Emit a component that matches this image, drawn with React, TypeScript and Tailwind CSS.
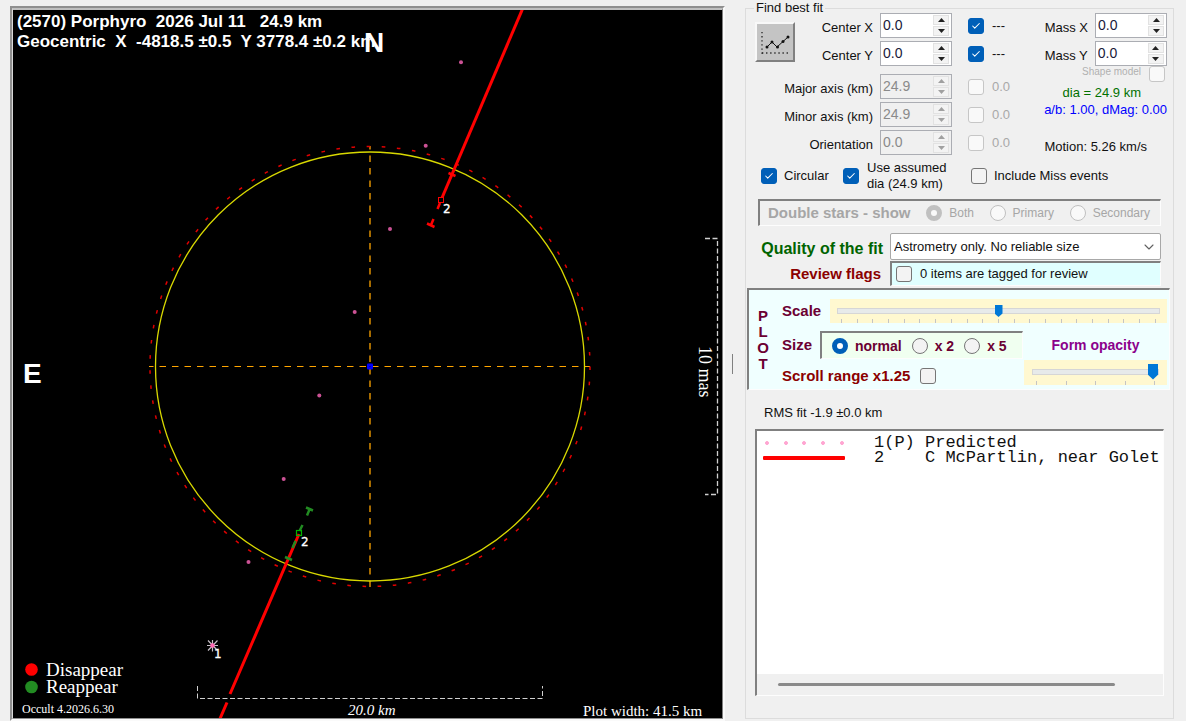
import { useState } from 'react';
import type { ReactNode } from 'react';
import { Check, ChevronDown } from 'lucide-react';

const PREDICTED_DOTS = [
  [461, 62.3],
  [425.7, 145.7],
  [390, 229],
  [354.7, 312],
  [319.3, 395.5],
  [283.7, 479],
  [248.5, 562],
];

function ChordPlot() {
  return (
    <svg
      viewBox="13 10 709 708"
      className="block w-full h-auto bg-black font-['Liberation_Sans',sans-serif]"
      role="img"
      aria-label="Chord plot"
    >
      {/* Axes */}
      <line x1="149" y1="366.5" x2="590" y2="366.5" stroke="#ffa500" strokeDasharray="6.5 6" strokeDashoffset="2" />
      <line x1="370" y1="146" x2="370" y2="587" stroke="#a66b00" strokeWidth="2" strokeDasharray="6.5 6" strokeDashoffset="3" />

      {/* Fitted circle and uncertainty */}
      <circle cx="370" cy="366.5" r="214.5" fill="none" stroke="#d8d800" strokeWidth="1.3" />
      <circle cx="370" cy="366.5" r="220" fill="none" stroke="#e00000" strokeWidth="1.5" strokeDasharray="3.6 11.59" />

      <rect x="367" y="363.5" width="6" height="6" rx="1" fill="#0000ff" />
      <rect x="369.5" y="366" width="1" height="1" fill="#000060" />

      {PREDICTED_DOTS.map(([x, y]) => (
        <circle key={x} cx={x} cy={y} r="2" fill="#cc5295" />
      ))}

      {/* Observed chord, upper part */}
      <g stroke="#ff0000" fill="none">
        <path d="M522.5 9 L441.5 199" strokeWidth="3" />
        <path d="M440 203 L437.5 209 M433.5 219 L431 225" strokeWidth="2.5" />
        <path d="M448.5 173 L455.5 176 M427 223.5 L434.5 227" strokeWidth="2.5" />
        <rect x="438.5" y="197.5" width="5" height="5" fill="#000" />
      </g>

      {/* Observed chord, lower part */}
      <path d="M299 534 L230 694 M227 702.5 L219 721" stroke="#ff0000" strokeWidth="3" />
      <g stroke="#228b22" fill="none" strokeWidth="2.5">
        <path d="M302.5 525 L299.5 531 M309.5 509.5 L307 515.5 M306 507.5 L313 510.5" />
        <path d="M295.5 541 L292.5 548 M285 557 L292 560" />
      </g>
      <rect x="296.5" y="530.5" width="5" height="5" fill="none" stroke="#00b400" strokeWidth="1.2" />

      {/* Star marker */}
      <path
        d="M212.5 640 V651.5 M207 645.5 H218 M208 640.5 L217.5 650.5 M217.5 640.5 L208 650.5"
        stroke="#c8c0c8"
        strokeWidth="1.2"
      />
      <circle cx="212.5" cy="645.5" r="2.3" fill="#ff69b4" />

      <g fill="#fff" fontSize="12" stroke="#fff" strokeWidth="0.3" className="font-['DejaVu_Sans',sans-serif]">
        <text x="443" y="213">2</text>
        <text x="301" y="546">2</text>
        <text x="214" y="658">1</text>
      </g>

      {/* Scale brackets */}
      <g stroke="#d0d0d0" fill="none" strokeDasharray="5 2.5">
        <path d="M197.5 686 V698.5 H542.5 V686" />
        <path d="M705 238.5 H717.5 V494.5 H705" strokeWidth="1.3" />
      </g>

      <g fill="#fff" fontWeight="bold" fontSize="17">
        <text x="17" y="27">{'(2570) Porphyro\u00a0 2026 Jul 11\u00a0\u00a0 24.9 km'}</text>
        <text x="17" y="47">{'Geocentric\u00a0 X\u00a0 -4818.5 ±0.5\u00a0 Y 3778.4 ±0.2 km'}</text>
      </g>
      <g fill="#fff" fontWeight="bold" fontSize="28">
        <text x="364" y="52">N</text>
        <text x="23" y="383">E</text>
      </g>

      <g fill="#fff" className="font-['Liberation_Serif',serif]">
        <text x="46" y="676" fontSize="19">Disappear</text>
        <text x="46" y="693" fontSize="19">Reappear</text>
        <text x="22" y="713" fontSize="12">Occult 4.2026.6.30</text>
        <text x="348" y="715" fontSize="15" fontStyle="italic">20.0 km</text>
        <text x="583" y="716" fontSize="15">Plot width: 41.5 km</text>
        <text transform="translate(699 346) rotate(90)" fontSize="18">10 mas</text>
      </g>
      <circle cx="31.5" cy="669.5" r="6.3" fill="#ff0000" />
      <circle cx="31.5" cy="687" r="6.3" fill="#228b22" />
    </svg>
  );
}

interface CheckProps {
  label: string;
  checked?: boolean;
  disabled?: boolean;
}

function CheckBox({ label, checked = false, disabled = false }: CheckProps) {
  const [on, setOn] = useState(checked);
  return (
    <span className="relative block size-4 shrink-0">
      <input
        type="checkbox"
        aria-label={label}
        checked={on}
        disabled={disabled}
        onChange={() => setOn(!on)}
        className="block size-4 appearance-none rounded-[3px] border border-[#767676] bg-[#f3f3f3] checked:border-[#005fb8] checked:bg-[#005fb8] disabled:border-[#c6c6c6] disabled:bg-[#f9f9f9]"
      />
      {on && <Check className="pointer-events-none absolute top-[3px] left-[3px] size-[10px] text-white" strokeWidth={2.5} />}
    </span>
  );
}

interface SpinProps {
  label: string;
  value: string;
  disabled?: boolean;
}

function SpinBox({ label, value, disabled = false }: SpinProps) {
  return (
    <div className={`flex h-[25px] w-[72px] shrink-0 border border-[#abadb3] ${disabled ? 'bg-[#f0f0f0]' : 'bg-white'}`}>
      <input
        type="text"
        aria-label={label}
        defaultValue={value}
        disabled={disabled}
        className="h-[21px] w-0 flex-1 bg-transparent pl-0.5 text-[14px] text-[#1a1a3a] disabled:text-[#8a8a8a]"
      />
      <div className="flex w-4 flex-col gap-px py-px mr-0.5">
        <button type="button" aria-label={`${label} up`} disabled={disabled} className="flex flex-1 items-center justify-center border border-[#e2e2e2] bg-[#f3f3f3] text-[#222] disabled:text-[#a0a0a0]">
          <svg width="7" height="4" viewBox="0 0 7 4"><path d="M3.5 0 L7 4 H0 Z" fill="currentColor" /></svg>
        </button>
        <button type="button" aria-label={`${label} down`} disabled={disabled} className="flex flex-1 items-center justify-center border border-[#e2e2e2] bg-[#f3f3f3] text-[#222] disabled:text-[#a0a0a0]">
          <svg width="7" height="4" viewBox="0 0 7 4"><path d="M3.5 4 L7 0 H0 Z" fill="currentColor" /></svg>
        </button>
      </div>
    </div>
  );
}

interface FitRowProps extends SpinProps {
  checked?: boolean;
  error: string;
}

function FitRow({ label, value, disabled, checked, error }: FitRowProps) {
  return (
    <div className="flex h-[25px] items-center justify-end">
      <span className="mr-[7px] pt-1">{label}</span>
      <SpinBox label={label} value={value} disabled={disabled} />
      <span className="ml-4">
        <CheckBox label={`Fit ${label}`} checked={checked} disabled={disabled} />
      </span>
      <span className={`ml-2 w-5 ${disabled ? 'text-[#a8a8a8]' : ''}`}>{error}</span>
    </div>
  );
}

interface RadioProps {
  name: string;
  label: string;
  defaultChecked?: boolean;
  disabled?: boolean;
}

function Radio({ name, label, defaultChecked, disabled }: RadioProps) {
  return (
    <label className="flex items-center gap-[7px]">
      <input
        type="radio"
        name={name}
        defaultChecked={defaultChecked}
        disabled={disabled}
        className="size-4 shrink-0 appearance-none rounded-full border border-[#767676] bg-[#f3f3f3] checked:border-5 checked:border-[#005fb8] checked:bg-white disabled:border-[#c0c0c0] disabled:bg-[#f9f9f9]"
      />
      {label}
    </label>
  );
}

function Sunken({ className, children }: { className: string; children: ReactNode }) {
  return (
    <div className={`border-t-2 border-l-2 border-r border-b border-t-[#808080] border-l-[#808080] border-r-[#fdfdfd] border-b-[#fdfdfd] ${className}`}>
      {children}
    </div>
  );
}

function Ticks({ count }: { count: number }) {
  return (
    <div className="flex justify-between px-1">
      {Array.from({ length: count }, (_, i) => (
        <span key={i} className="h-1 w-px bg-[#c4c4c4]" />
      ))}
    </div>
  );
}

export default function App() {
  return (
    <div className="flex min-h-screen bg-[#f0f0f0] pl-[10px] pr-3 font-['Liberation_Sans',sans-serif] text-[13px] leading-4 text-[#111]">
      <main className="mt-[6px] min-w-0 flex-1 self-start border-2 border-t-[#8f8f8f] border-l-[#8f8f8f] border-r-[#fafafa] border-b-[#fafafa]">
        <div className="border-t-2 border-r border-b border-l border-t-[#c0c0c0] border-l-[#d8d8d8] border-r-[#808080] border-b-[#909090]">
          <ChordPlot />
        </div>
      </main>

      {/* Splitter grip */}
      <div className="flex w-5 shrink-0 items-center pt-1.5 pl-[7px]">
        <span className="h-5 w-px bg-[#808080]" />
      </div>

      <fieldset className="mt-[3px] mb-0.5 flex w-[429px] min-w-0 shrink-0 flex-col border border-[#dcdcdc]">
        <legend className="ml-2 h-[10px] px-0.5 leading-[10px]">Find best fit</legend>

        <div className="flex justify-between pl-[9px] pr-[6px]">
          <div className="w-[257px]">
            <div className="flex justify-between">
              <button
                type="button"
                aria-label="Plot residuals"
                className="mt-[9px] size-10 border-2 border-t-[#f8f8f8] border-l-[#f8f8f8] border-r-[#808080] border-b-[#808080] bg-[#c4c4c4]"
              >
                <svg viewBox="0 0 36 36" className="block size-full">
                  <path d="M5 8 V31" stroke="#222" strokeWidth="1.3" strokeDasharray="1.3 2.8" />
                  <path d="M5 29 H33" stroke="#222" strokeWidth="1.3" strokeDasharray="1.3 2.8" />
                  <path d="M10 23 L15 18 L20 23 L31 13" fill="none" stroke="#111" />
                  <g fill="#111">
                    <circle cx="10" cy="23" r="1.5" />
                    <circle cx="15" cy="18" r="1.5" />
                    <circle cx="20.5" cy="23" r="1.5" />
                    <circle cx="26" cy="17.5" r="1.5" />
                    <circle cx="31" cy="13" r="1.5" />
                  </g>
                </svg>
              </button>
              <div className="flex flex-col gap-[3px]">
                <FitRow label="Center X" value="0.0" checked error="---" />
                <FitRow label="Center Y" value="0.0" checked error="---" />
              </div>
            </div>
            <div className="mt-2 flex flex-col gap-[3px]">
              <FitRow label="Major axis (km)" value="24.9" disabled error="0.0" />
              <FitRow label="Minor axis (km)" value="24.9" disabled error="0.0" />
              <FitRow label="Orientation" value="0.0" disabled error="0.0" />
            </div>
          </div>

          <div className="flex flex-col items-end">
            <div className="flex flex-col gap-[3px]">
              <div className="flex items-center gap-[7px]">
                <span className="pt-1">Mass X</span>
                <SpinBox label="Mass X" value="0.0" />
              </div>
              <div className="flex items-center gap-[7px]">
                <span className="pt-1">Mass Y</span>
                <SpinBox label="Mass Y" value="0.0" />
              </div>
            </div>
            <div className="flex gap-2 pr-0.5 text-[10px] leading-3 text-[#b0b0b0]">
              <span>Shape model</span>
              <CheckBox label="Shape model" disabled />
            </div>
            <p className="mt-[3px] mr-[26px] text-[#007000]">dia = 24.9 km</p>
            <p className="mt-px text-[#0000ff]">a/b: 1.00, dMag: 0.00</p>
            <p className="mt-[21px] mr-5">Motion: 5.26 km/s</p>
          </div>
        </div>

        <div className="mt-[5px] flex h-8 items-center pl-[15px]">
          <label className="flex w-[82px] items-center gap-[7px]">
            <CheckBox label="Circular" checked />
            Circular
          </label>
          <label className="flex w-32 items-center gap-2">
            <CheckBox label="Use assumed dia" checked />
            <span>Use assumed<br />dia (24.9 km)</span>
          </label>
          <label className="flex items-center gap-[7px]">
            <CheckBox label="Include Miss events" />
            Include Miss events
          </label>
        </div>

        <Sunken className="mx-3 mt-[7px] flex h-[27px] items-center justify-between pl-2 pr-[10px] text-[12px] text-[#a6a6a6]">
          <span className="text-[15px] font-bold">Double stars - show</span>
          <Radio name="stars" label="Both" disabled defaultChecked />
          <Radio name="stars" label="Primary" disabled />
          <Radio name="stars" label="Secondary" disabled />
        </Sunken>

        <div className="mt-[7px] flex items-center justify-end pr-3">
          <label htmlFor="quality" className="mr-[7px] pt-1 text-[16px] font-bold text-[#006400]">
            Quality of the fit
          </label>
          <div className="relative w-[271px]">
            <select
              id="quality"
              className="block h-[27px] w-full appearance-none rounded-[2px] border border-[#a8a8a8] bg-white pl-[3px] text-[13px] text-[#111]"
            >
              <option>Astrometry only. No reliable size</option>
            </select>
            <ChevronDown className="pointer-events-none absolute top-[6px] right-1 size-4 text-[#606060]" strokeWidth={1.6} />
          </div>
        </div>

        <div className="mt-px flex items-center justify-end pr-3">
          <span className="mr-[9px] text-[15px] font-bold text-[#8b0000]">Review flags</span>
          <Sunken className="w-[271px] bg-[#e0ffff]">
            <label className="flex h-[22px] items-center gap-2 pl-1">
              <CheckBox label="Items tagged for review" />
              0 items are tagged for review
            </label>
          </Sunken>
        </div>

        <Sunken className="mt-0.5 mr-[3px] ml-px flex bg-[#f0ffff] text-[15px] font-bold text-[#6b0032]">
          <div className="flex w-[33px] flex-col pt-[18px] pl-2 leading-4">
            {['P', 'L', 'O', 'T'].map((c) => (
              <span key={c} className="w-3 text-center">{c}</span>
            ))}
          </div>

          <div className="flex-1 pt-[9px] pb-1">
            <div className="flex items-center">
              <label htmlFor="scale" className="w-12">Scale</label>
              <div className="flex-1 bg-[#fff8d0] px-[7px] pt-1 mr-0.5">
                <input
                  id="scale"
                  type="range"
                  min="0"
                  max="20"
                  defaultValue="10"
                  className="block h-4 w-full appearance-none bg-transparent [&::-webkit-slider-runnable-track]:h-1.5 [&::-webkit-slider-runnable-track]:border [&::-webkit-slider-runnable-track]:border-[#d6d6d6] [&::-webkit-slider-runnable-track]:bg-[#e7eaea] [&::-webkit-slider-thumb]:-mt-1 [&::-webkit-slider-thumb]:h-3 [&::-webkit-slider-thumb]:w-2 [&::-webkit-slider-thumb]:appearance-none [&::-webkit-slider-thumb]:bg-[#0078d7] [&::-webkit-slider-thumb]:[clip-path:polygon(0_0,100%_0,100%_70%,50%_100%,0_70%)]"
                />
                <Ticks count={21} />
              </div>
            </div>

            <div className="flex">
              <div className="flex-1">
                <div className="mt-2 flex items-center">
                  <span className="w-[38px]">Size</span>
                  <Sunken className="flex h-7 w-[203px] items-center gap-[10px] bg-[#f0fff0] pl-[10px] text-[14px]">
                    <Radio name="size" label="normal" defaultChecked />
                    <Radio name="size" label="x 2" />
                    <Radio name="size" label="x 5" />
                  </Sunken>
                </div>
                <label className="mt-[9px] flex items-center gap-[10px] text-[#8b0000]">
                  Scroll range x1.25
                  <CheckBox label="Scroll range x1.25" />
                </label>
              </div>

              <div className="mr-0.5 w-[143px]">
                <label htmlFor="opacity" className="mt-[14px] mb-[7px] block text-center text-[14px] text-[#8b008b]">
                  Form opacity
                </label>
                <div className="bg-[#fff8d0] px-2 pt-0.5">
                  <input
                    id="opacity"
                    type="range"
                    min="0"
                    max="4"
                    defaultValue="4"
                    className="block h-[19px] w-full appearance-none bg-transparent [&::-webkit-slider-runnable-track]:h-1.5 [&::-webkit-slider-runnable-track]:border [&::-webkit-slider-runnable-track]:border-[#d6d6d6] [&::-webkit-slider-runnable-track]:bg-[#e7eaea] [&::-webkit-slider-thumb]:-mt-1.5 [&::-webkit-slider-thumb]:h-4 [&::-webkit-slider-thumb]:w-[10px] [&::-webkit-slider-thumb]:appearance-none [&::-webkit-slider-thumb]:bg-[#0078d7] [&::-webkit-slider-thumb]:[clip-path:polygon(0_0,100%_0,100%_70%,50%_100%,0_70%)]"
                  />
                  <Ticks count={5} />
                </div>
              </div>
            </div>
          </div>
        </Sunken>

        <p className="mt-[15px] ml-[18px]">RMS fit -1.9 ±0.0 km</p>

        <Sunken className="mx-[9px] mt-2 mb-[22px] flex flex-1 flex-col bg-white">
          <ul className="flex-1 overflow-hidden pt-1 pl-[6px] font-['Liberation_Mono',monospace] text-[17px] leading-[15px] whitespace-pre">
            <li className="flex items-center">
              <svg width="82" height="6" className="mr-[29px] shrink-0">
                {[4, 23, 41, 60, 79].map((x) => (
                  <circle key={x} cx={x} cy="3" r="1.5" fill="#ffb0d8" stroke="#ff85c0" strokeWidth="0.7" />
                ))}
              </svg>
              {'1(P) Predicted'}
            </li>
            <li className="flex items-center">
              <svg width="82" height="4" className="mr-[29px] shrink-0">
                <rect width="82" height="4" rx="1" fill="#ff0000" />
              </svg>
              {'2    C McPartlin, near Golet'}
            </li>
          </ul>
          <div className="h-[21px] bg-[#f0f0f0] pt-[9px] pl-[21px] pr-12">
            <div className="h-[3px] rounded-full bg-[#8a8a8a]" />
          </div>
        </Sunken>
      </fieldset>
    </div>
  );
}
